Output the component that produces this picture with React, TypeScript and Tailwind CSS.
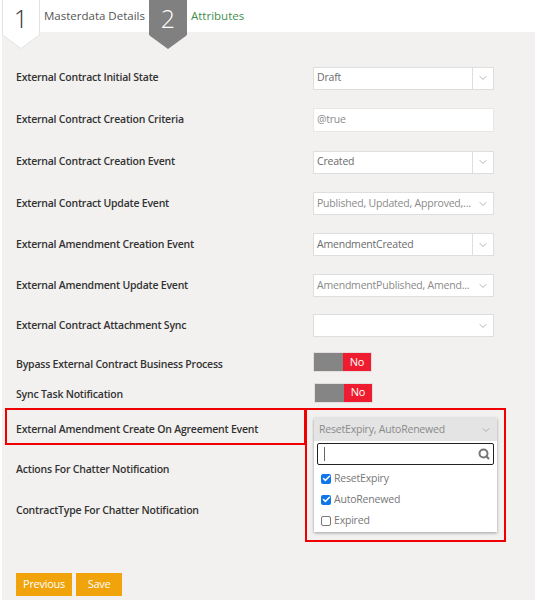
import { ChevronDown, Search, Check } from 'lucide-react';

const FONT = "font-['Open_Sans','Noto_Sans',sans-serif]";

function Label({ children }: { children: string }) {
  return <span className="text-[10.5px] font-semibold text-[#333] tracking-[-0.22px] whitespace-nowrap">{children}</span>;
}

function SelectBox({ value, divider = true, muted = false }: { value: string; divider?: boolean; muted?: boolean }) {
  return (
    <div className="w-[181px] h-[23px] flex items-center bg-white border border-[#dedede]">
      <span className={`flex-1 min-w-0 whitespace-nowrap pl-[3px] text-[10.5px] tracking-[-0.2px] ${muted ? 'text-[#8a8a8a]' : 'text-[#6b6b6b]'}`}>{value}</span>
      <span className={`w-[21px] h-full flex items-center justify-center ${divider ? 'border-l border-[#dedede]' : ''}`}>
        <ChevronDown className="w-3 h-3 text-[#999]" strokeWidth={1.5} />
      </span>
    </div>
  );
}

function Toggle() {
  return (
    <div className="flex w-[59px] h-[20px] border border-[#e4dede]">
      <div className="w-[29px] bg-[#858585]" />
      <div className="flex-1 bg-[#ee1c2e] text-white text-[11px] tracking-[-0.2px] flex items-center justify-center">No</div>
    </div>
  );
}

function Tab({ num, fill, stroke, numColor }: { num: string; fill: string; stroke: string; numColor: string }) {
  return (
    <div className="relative w-[38px] h-[49px] shrink-0">
      <svg width="38" height="49" viewBox="0 0 38 49" className="absolute inset-0">
        <path d="M0.5 0V35L19 48.5L37.5 35V0" fill={fill} stroke={stroke} />
      </svg>
      <span className={`absolute left-0 right-0 top-0 text-center text-[25px] font-light leading-[36px] ${numColor}`}>{num}</span>
    </div>
  );
}

function Option({ label, checked }: { label: string; checked: boolean }) {
  return (
    <div className="h-[21px] flex items-center gap-[3px] pl-[7px]">
      {checked ? (
        <span className="w-[10px] h-[10px] rounded-[2px] bg-[#0f75e8] flex items-center justify-center">
          <Check className="w-[9px] h-[9px] text-white" strokeWidth={4} />
        </span>
      ) : (
        <span className="w-[10px] h-[10px] rounded-[2px] border border-[#777] bg-white" />
      )}
      <span className="text-[10.5px] tracking-[-0.2px] text-[#777]">{label}</span>
    </div>
  );
}

export default function App() {
  return (
    <div className={`relative w-[537px] h-[600px] overflow-hidden bg-white ${FONT}`}>
      <div className="relative z-10 h-[32px] flex items-start">
        <div className="ml-[2px] flex items-start">
          <Tab num="1" fill="#ffffff" stroke="#e2e2e2" numColor="text-[#333]" />
          <span className="ml-[4px] mt-[8px] w-[105px] text-[11.5px] leading-4 text-[#555]">Masterdata Details</span>
          <Tab num="2" fill="#808080" stroke="#808080" numColor="text-white" />
          <span className="ml-[4px] mt-[8px] text-[11.5px] leading-4 text-[#3f8f50]">Attributes</span>
        </div>
      </div>

      <div className="ml-[2px] w-[533px] h-[568px] bg-[#f2f1f0] pl-[14px] pt-[25px]">
        <div className="h-[42px] flex items-center justify-between pr-[41px]">
          <Label>External Contract Initial State</Label>
          <SelectBox value="Draft" />
        </div>
        <div className="h-[42px] flex items-center justify-between pr-[41px]">
          <Label>External Contract Creation Criteria</Label>
          <div className="w-[181px] h-[24px] flex items-center bg-white border border-[#e6e6e6] pl-[3px] text-[10.5px] tracking-[-0.2px] text-[#8a8a8a]">@true</div>
        </div>
        <div className="h-[42px] flex items-center justify-between pr-[41px]">
          <Label>External Contract Creation Event</Label>
          <SelectBox value="Created" />
        </div>
        <div className="h-[41px] flex items-center justify-between pr-[41px]">
          <Label>External Contract Update Event</Label>
          <SelectBox value="Published, Updated, Approved,..." divider={false} muted />
        </div>
        <div className="h-[41px] flex items-center justify-between pr-[41px]">
          <Label>External Amendment Creation Event</Label>
          <SelectBox value="AmendmentCreated" />
        </div>
        <div className="h-[41px] flex items-center justify-between pr-[41px]">
          <Label>External Amendment Update Event</Label>
          <SelectBox value="AmendmentPublished, Amend..." divider={false} muted />
        </div>
        <div className="h-[39px] flex items-center justify-between pr-[41px]">
          <Label>External Contract Attachment Sync</Label>
          <SelectBox value="" divider={false} />
        </div>
        <div className="h-[40px] flex items-center justify-between pr-[163px]">
          <Label>Bypass External Contract Business Process</Label>
          <div className="mb-[6px]">
            <Toggle />
          </div>
        </div>
        <div className="h-[20px] flex items-center justify-between pr-[162px]">
          <Label>Sync Task Notification</Label>
          <div className="mb-[5px]">
            <Toggle />
          </div>
        </div>
        <div className="h-[50px] flex items-center">
          <Label>External Amendment Create On Agreement Event</Label>
        </div>
        <div className="h-[30px] flex items-center">
          <Label>Actions For Chatter Notification</Label>
        </div>
        <div className="h-[52px] flex items-center">
          <Label>ContractType For Chatter Notification</Label>
        </div>
        <div className="mt-[36px] flex gap-[4px]">
          <button className="w-[56px] h-[23px] bg-[#f0a30a] text-white text-[11px] tracking-[-0.3px]">Previous</button>
          <button className="w-[46px] h-[23px] bg-[#f0a30a] text-white text-[11px] tracking-[-0.3px]">Save</button>
        </div>
      </div>

      {/* opened dropdown */}
      <div className="absolute left-[314px] top-[418px] w-[183px] h-[114px] bg-white shadow-[0_1px_3px_rgba(0,0,0,0.35)]">
        <div className="h-[23px] bg-[#e4e4e4] flex items-center justify-between pl-[5px] pr-[5px]">
          <span className="text-[10.5px] tracking-[-0.2px] text-[#8a8a8a]">ResetExpiry, AutoRenewed</span>
          <ChevronDown className="w-3 h-3 text-[#999]" strokeWidth={1.5} />
        </div>
        <div className="mx-[3px] mt-[2px] h-[22px] border-[1.5px] border-[#222] rounded-[2px] bg-white flex items-center justify-between pl-[6px] pr-[3px]">
          <span className="w-px h-[14px] bg-[#666]" />
          <Search className="w-[12px] h-[12px] text-[#777]" strokeWidth={4} />
        </div>
        <div className="mt-[3px]">
          <Option label="ResetExpiry" checked />
          <Option label="AutoRenewed" checked />
          <Option label="Expired" checked={false} />
        </div>
      </div>

      {/* red annotation boxes */}
      <div className="absolute left-[5px] top-[408px] w-[301px] h-[37px] border-2 border-[#f00000]" />
      <div className="absolute left-[305px] top-[408px] w-[201px] h-[134px] border-2 border-[#f00000]" />
    </div>
  );
}
